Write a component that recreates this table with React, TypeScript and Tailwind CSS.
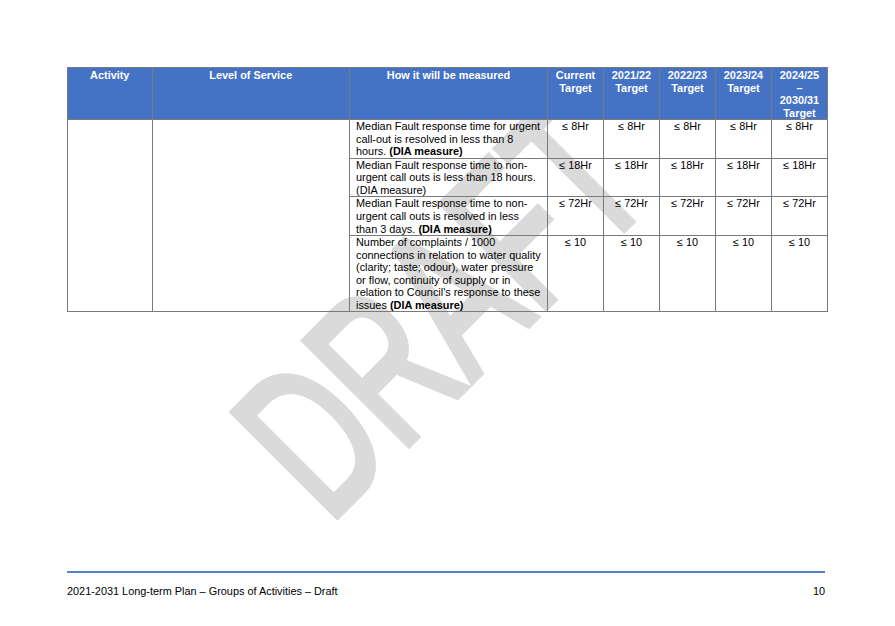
import type { ReactNode } from "react";

const font = { fontFamily: '"Liberation Sans", Arial, sans-serif' };

type Row = { text: ReactNode; targets: string[] };

const rows: Row[] = [
  {
    text: (
      <>
        Median Fault response time for urgent
        <br />
        call-out is resolved in less than 8
        <br />
        hours. <b>(DIA measure)</b>
      </>
    ),
    targets: ["≤ 8Hr", "≤ 8Hr", "≤ 8Hr", "≤ 8Hr", "≤ 8Hr"],
  },
  {
    text: (
      <>
        Median Fault response time to non-
        <br />
        urgent call outs is less than 18 hours.
        <br />
        (DIA measure)
      </>
    ),
    targets: ["≤ 18Hr", "≤ 18Hr", "≤ 18Hr", "≤ 18Hr", "≤ 18Hr"],
  },
  {
    text: (
      <>
        Median Fault response time to non-
        <br />
        urgent call outs is resolved in less
        <br />
        than 3 days. <b>(DIA measure)</b>
      </>
    ),
    targets: ["≤ 72Hr", "≤ 72Hr", "≤ 72Hr", "≤ 72Hr", "≤ 72Hr"],
  },
  {
    text: (
      <>
        Number of complaints / 1000
        <br />
        connections in relation to water quality
        <br />
        (clarity; taste; odour), water pressure
        <br />
        or flow, continuity of supply or in
        <br />
        relation to Council's response to these
        <br />
        issues <b>(DIA measure)</b>
      </>
    ),
    targets: ["≤ 10", "≤ 10", "≤ 10", "≤ 10", "≤ 10"],
  },
];

const headers: ReactNode[] = [
  "Activity",
  "Level of Service",
  "How it will be measured",
  <>
    Current
    <br />
    Target
  </>,
  <>
    2021/22
    <br />
    Target
  </>,
  <>
    2022/23
    <br />
    Target
  </>,
  <>
    2023/24
    <br />
    Target
  </>,
  <>
    2024/25
    <br />–<br />
    2030/31
    <br />
    Target
  </>,
];

export default function App() {
  return (
    <div
      className="relative flex h-[626px] w-[895px] flex-col bg-white pt-[67px] text-[10.9px] leading-[12.55px] text-black"
      style={font}
    >
      {/* page body: watermark sits behind the table, header shading covers it */}
      <div className="relative flex-1 overflow-hidden pl-[67px] pr-[68px]">
        <div
          className="pointer-events-none absolute left-[328.5px] top-[324px] whitespace-nowrap text-[159px] leading-none text-[#dadada] [-webkit-text-stroke:5px_#dadada] [transform-origin:0_134.6px] [transform:rotate(-45deg)_scale(0.88,1.347)]"
          style={font}
        >
          DRAFT
        </div>

        <table className="relative z-10 w-[760px] table-fixed border-collapse">
          <colgroup>
            <col className="w-[84.5px]" />
            <col className="w-[197.5px]" />
            <col className="w-[198px]" />
            <col className="w-[56px]" />
            <col className="w-[56px]" />
            <col className="w-[56px]" />
            <col className="w-[56px]" />
            <col className="w-[56px]" />
          </colgroup>
          <thead>
            <tr>
              {headers.map((h, i) => (
                <th
                  key={i}
                  className="border border-[#7a7a7a] bg-[#4472c4] px-[5px] pt-px text-center align-top font-bold text-white"
                >
                  {h}
                </th>
              ))}
            </tr>
          </thead>
          <tbody>
            {rows.map((r, i) => (
              <tr key={i}>
                {i === 0 && (
                  <>
                    <td rowSpan={4} className="border border-[#7a7a7a]" />
                    <td rowSpan={4} className="border border-[#7a7a7a]" />
                  </>
                )}
                <td className="whitespace-nowrap border border-[#7a7a7a] pl-[6px] pr-0 align-top">
                  {r.text}
                </td>
                {r.targets.map((t, j) => (
                  <td
                    key={j}
                    className="border border-[#7a7a7a] px-[2px] text-center align-top"
                  >
                    {t}
                  </td>
                ))}
              </tr>
            ))}
          </tbody>
        </table>
      </div>

      <footer className="pb-[28px] pl-[67px] pr-[70px]">
        <div className="h-[2px] bg-[#5580cc]" />
        <div className="mt-[12px] flex justify-between">
          <span>2021-2031 Long-term Plan – Groups of Activities – Draft</span>
          <span>10</span>
        </div>
      </footer>
    </div>
  );
}
